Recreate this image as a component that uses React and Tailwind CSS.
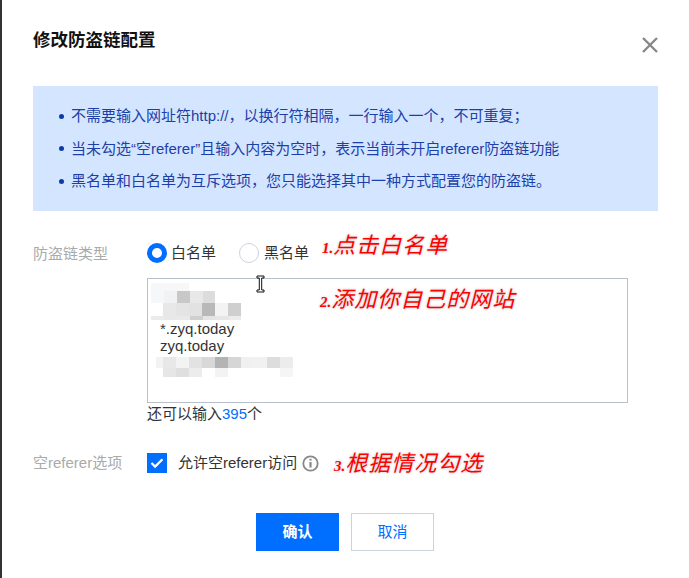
import { useState } from 'react';

const font = 'font-["Liberation_Sans","Noto_Sans_CJK_SC",sans-serif]';

// blurred-out domains in the textarea: [x, y, w, h, fill], relative to the box
const mosaic = [
  [3, 4, 38, 9, '#f6f7f9'],
  [3, 12, 13, 12, '#f6f7f9'],
  [16, 12, 13, 12, '#f1f2f2'],
  [29, 12, 13, 12, '#c8c8c8'],
  [42, 12, 13, 12, '#e8e8e8'],
  [55, 12, 12, 12, '#dcdcdc'],
  [15, 24, 13, 13, '#e8e8e8'],
  [28, 24, 13, 13, '#e4e4e4'],
  [41, 24, 13, 13, '#e2e2e2'],
  [54, 24, 13, 13, '#b8b8b8'],
  [67, 24, 13, 13, '#f3f3f3'],
  [80, 24, 13, 13, '#cfcfcf'],
  [3, 37, 13, 4, '#ebebeb'],
  [16, 37, 13, 4, '#e8e8e8'],
  [29, 37, 13, 4, '#e9e9e9'],
  [42, 37, 13, 4, '#cfcfcf'],
  [55, 37, 13, 4, '#e4e4e4'],
  [68, 37, 13, 4, '#e6e6e6'],
  [81, 37, 12, 4, '#ececec'],
  [8, 78, 7, 11, '#f3f3f3'],
  [15, 78, 13, 11, '#e8e8e8'],
  [28, 78, 13, 11, '#f3f3f3'],
  [41, 78, 13, 11, '#e2e2e2'],
  [54, 78, 13, 11, '#d8d8d8'],
  [67, 78, 13, 11, '#b4b4b4'],
  [80, 78, 13, 11, '#d6d6d6'],
  [93, 78, 13, 11, '#f0f0f0'],
  [106, 78, 13, 11, '#f1f1f1'],
  [119, 78, 13, 11, '#dddddd'],
  [132, 78, 13, 11, '#ececec'],
  [15, 89, 13, 9, '#e6e6e6'],
  [28, 89, 13, 9, '#dfdfdf'],
  [41, 89, 13, 9, '#ececec'],
  [67, 89, 13, 9, '#f3f3f3'],
  [132, 89, 13, 9, '#f5f5f5'],
];

const Note = ({ className, num, children }) => (
  <div className={`absolute flex items-baseline whitespace-nowrap italic text-[#ff0000] [text-shadow:0_0_3px_#b8b8b8] ${className}`}>
    <span className='font-["Liberation_Serif",serif] text-[15px] font-bold'>{num}.</span>
    <span className='text-[22px] tracking-[1px] leading-[26px]'>{children}</span>
  </div>
);

const App = () => {
  const [kind, setKind] = useState('white');
  const [allowEmpty, setAllowEmpty] = useState(true);

  return (
    <div className={`relative w-[689px] h-[578px] overflow-hidden bg-white border-l-2 border-[#333333] text-[15px] text-[#333333] ${font}`}>
      {/* title */}
      <div className="flex justify-between pl-[31px] pr-[30px] pt-[28px] h-[86px] items-start">
        <h2 className="text-[17.5px] leading-[24px] font-bold text-[#111111]">修改防盗链配置</h2>
        <button className="mt-[9px] mr-[1px] text-[#888888]">
          <svg width="16" height="16" viewBox="0 0 16 16" fill="none" stroke="currentColor" strokeWidth="2.4">
            <path d="M1 1l14 14M15 1L1 15" />
          </svg>
        </button>
      </div>

      {/* notice */}
      <ul className="ml-[31px] w-[625px] h-[125px] bg-[#d4e6ff] pl-[26px] pt-[14px] text-[#1c3faa] leading-[32.5px]">
        {[
          '不需要输入网址符http://，以换行符相隔，一行输入一个，不可重复；',
          '当未勾选“空referer”且输入内容为空时，表示当前未开启referer防盗链功能',
          '黑名单和白名单为互斥选项，您只能选择其中一种方式配置您的防盗链。',
        ].map((line) => (
          <li key={line} className="flex items-center gap-[7px]">
            <span className="w-[5px] h-[5px] rounded-full bg-[#0f39a8]" />
            {line}
          </li>
        ))}
      </ul>

      {/* type */}
      <div className="flex mt-[32px] pl-[31px]">
        <div className="w-[114px] text-[#aaaaaa] leading-[22px]">防盗链类型</div>
        <div>
          <div className="flex items-center h-[20px] leading-[20px]">
            <button onClick={() => setKind('white')} className="flex items-center">
              <span className={`w-[20px] h-[20px] rounded-full ${kind === 'white' ? 'border-[5px] border-[#006eff]' : 'border border-[#ccd3de]'}`} />
              <span className="ml-[4px] mr-[23px]">白名单</span>
            </button>
            <button onClick={() => setKind('black')} className="flex items-center">
              <span className={`w-[20px] h-[20px] rounded-full ${kind === 'black' ? 'border-[5px] border-[#006eff]' : 'border border-[#ccd3de]'}`} />
              <span className="ml-[5px]">黑名单</span>
            </button>
          </div>
          <div className="relative mt-[15px] w-[481px] h-[125px] border border-[#b8c0cc] pl-[12px] pt-[41px] leading-[17px]">
            <svg className="absolute left-0 top-0" width="160" height="100">
              {mosaic.map(([x, y, w, h, fill], i) => (
                <rect key={i} x={x} y={y} width={w} height={h} fill={fill} />
              ))}
            </svg>
            <div className="relative">*.zyq.today</div>
            <div className="relative">zyq.today</div>
          </div>
          <div className="mt-[1px] leading-[20px]">
            还可以输入<span className="text-[#006eff]">395</span>个
          </div>
        </div>
      </div>

      {/* empty referer */}
      <div className="flex items-center mt-[29px] pl-[31px] h-[20px]">
        <div className="w-[114px] text-[#aaaaaa]">空referer选项</div>
        <button onClick={() => setAllowEmpty(!allowEmpty)} className={`flex items-center justify-center w-[20px] h-[20px] ${allowEmpty ? 'bg-[#006eff]' : 'border border-[#ccd3de]'}`}>
          {allowEmpty && (
            <svg width="14" height="12" viewBox="0 0 14 12" fill="none" stroke="#ffffff" strokeWidth="2.2">
              <path d="M1.5 6l3.6 3.6L12.5 2.2" />
            </svg>
          )}
        </button>
        <span className="ml-[11px] whitespace-nowrap">允许空referer访问</span>
        <svg className="ml-[5px]" width="17" height="17" viewBox="0 0 17 17" fill="none" stroke="#888888">
          <circle cx="8.5" cy="8.5" r="7.2" strokeWidth="1.8" />
          <path d="M8.5 7v5.5" strokeWidth="2.2" />
          <path d="M8.5 3.8v1.8" strokeWidth="2.2" />
        </svg>
      </div>

      {/* actions */}
      <div className="flex justify-center gap-[12px] mt-[40px] pr-[1px]">
        <button className="w-[83px] h-[38px] bg-[#006eff] text-white font-bold">确认</button>
        <button className="w-[83px] h-[38px] border border-[#ccd3de] text-[#006eff]">取消</button>
      </div>

      {/* annotations drawn over the dialog */}
      <Note className="left-[320px] top-[233px]" num="1">点击白名单</Note>
      <Note className="left-[318px] top-[287px]" num="2">添加你自己的网站</Note>
      <Note className="left-[332px] top-[451px]" num="3">根据情况勾选</Note>

      {/* text cursor */}
      <svg className="absolute left-[254px] top-[275px]" width="9" height="18" viewBox="0 0 9 18" fill="#ffffff" stroke="#111111" strokeWidth="1">
        <path d="M1 1h7v2H5.7v12H8v2H1v-2h2.3V3H1z" />
      </svg>
    </div>
  );
};

export default App;
